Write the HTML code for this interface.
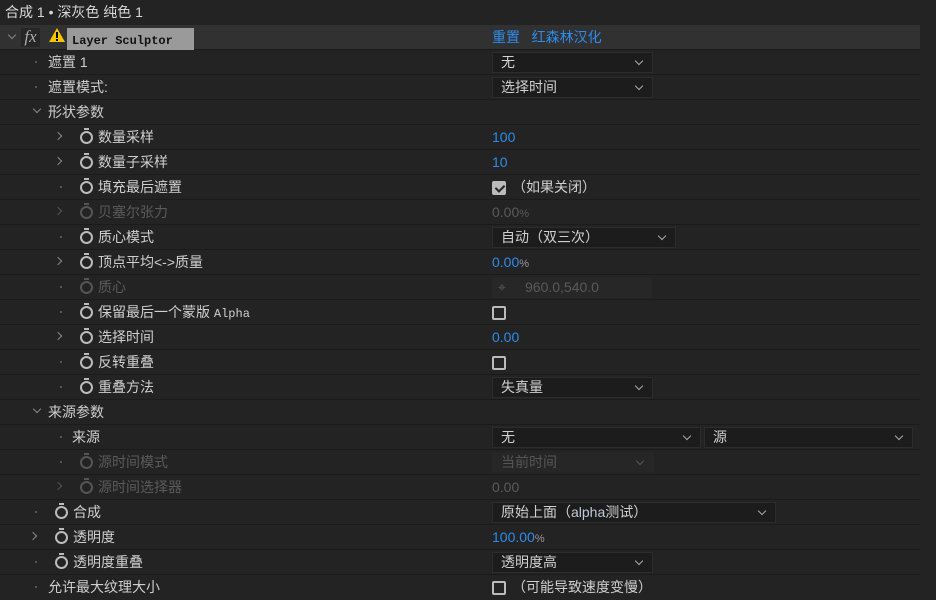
<!DOCTYPE html><html><head><meta charset="utf-8"><style>
*{margin:0;padding:0;box-sizing:border-box}
body{width:936px;height:600px;background:#232323;overflow:hidden;position:relative;font-family:"Liberation Sans","Noto Sans CJK SC",sans-serif;font-size:14px;color:#cfcfcf}
.r{position:absolute;left:0;width:920px;height:25px;border-bottom:1px solid #1b1b1b}
.t{position:absolute;top:3px;white-space:nowrap;line-height:18px}
.dis{color:#5a5a5a}
.blue{color:#2d8ceb}
.dot{position:absolute;top:11px;width:2px;height:2px;background:#555}
.chr{position:absolute;top:8px;width:6px;height:6px;border-right:1px solid #888;border-bottom:1px solid #888;transform:rotate(-45deg)}
.chd{position:absolute;top:6px;width:6px;height:6px;border-right:1px solid #888;border-bottom:1px solid #888;transform:rotate(45deg)}
.sw{position:absolute;top:6px;width:13px;height:13px;border:2px solid #bbb;border-radius:50%}
.sw:before{content:"";position:absolute;left:2px;top:-5px;width:5px;height:2px;background:#bbb}
.sw.d{border-color:#555}.sw.d:before{background:#555}
.dd{position:absolute;top:2px;height:21px;background:#1c1c1c;border:1px solid #2c2c2c;padding-left:8px;line-height:19px;color:#d0d0d0}
.dd:after{content:"";position:absolute;right:10px;top:5px;width:5px;height:5px;border-right:1px solid #aaa;border-bottom:1px solid #aaa;transform:rotate(45deg)}
.dd.d{background:#262626;border-color:#262626;color:#555}.dd.d:after{border-color:#555}
.cb{position:absolute;top:6px;left:492px;width:14px;height:14px;border:2px solid #bbb;border-radius:2px}
.cb.on{background:#bbb}
.cb.on:after{content:"";position:absolute;left:3px;top:0px;width:4px;height:7px;border-right:2px solid #222;border-bottom:2px solid #222;transform:rotate(45deg)}
.pct{font-size:11px;color:#999}
</style></head><body>
<div class="t" style="left:5px;top:3px;color:#d8d8d8">合成 1 • 深灰色 纯色 1</div>
<div style="position:absolute;left:0;top:25px;width:920px;height:25px;background:#313131;border-bottom:1px solid #1b1b1b">
 <div class="chd" style="left:9px;top:7px"></div>
 <div style="position:absolute;left:21px;top:3px;width:19px;height:19px;background:#262626;color:#aaa;font-style:italic;font-family:'Liberation Serif',serif;font-size:17px;line-height:17px;text-align:center">fx</div>
 <svg style="position:absolute;left:49px;top:3px" width="16" height="14"><polygon points="8,0 16,14 0,14" fill="#f5c400"/><rect x="7" y="4" width="2" height="6" fill="#000"/><rect x="7" y="11" width="2" height="2" fill="#000"/></svg>
 <div style="position:absolute;left:67px;top:3px;width:127px;height:22px;background:#9a9a9a;color:#111;font-family:'Liberation Mono',monospace;font-weight:bold;font-size:12px;line-height:26px;padding-left:5px">Layer Sculptor</div>
 <div class="t blue" style="left:492px">重置 &nbsp;&nbsp;红森林汉化</div>
</div>
<div class="r" style="top:50px"><div class="dot" style="left:35px"></div><div class="t" style="left:48px">遮置 1</div><div class="dd" style="left:492px;width:161px">无</div></div>
<div class="r" style="top:75px"><div class="dot" style="left:35px"></div><div class="t" style="left:48px">遮置模式:</div><div class="dd" style="left:492px;width:161px">选择时间</div></div>
<div class="r" style="top:100px"><div class="chd" style="left:34px"></div><div class="t" style="left:48px">形状参数</div></div>
<div class="r" style="top:125px"><div class="chr" style="left:55px"></div><div class="sw" style="left:80px"></div><div class="t" style="left:98px">数量采样</div><div class="t blue" style="left:492px">100</div></div>
<div class="r" style="top:150px"><div class="chr" style="left:55px"></div><div class="sw" style="left:80px"></div><div class="t" style="left:98px">数量子采样</div><div class="t blue" style="left:492px">10</div></div>
<div class="r" style="top:175px"><div class="dot" style="left:60px"></div><div class="sw" style="left:80px"></div><div class="t" style="left:98px">填充最后遮置</div><div class="cb on"></div><div class="t" style="left:512px">（如果关闭）</div></div>
<div class="r" style="top:200px"><div class="chr" style="left:55px;border-color:#555"></div><div class="sw d" style="left:80px"></div><div class="t dis" style="left:98px">贝塞尔张力</div><div class="t dis" style="left:492px">0.00<span style="font-size:11px">%</span></div></div>
<div class="r" style="top:225px"><div class="dot" style="left:60px"></div><div class="sw" style="left:80px"></div><div class="t" style="left:98px">质心模式</div><div class="dd" style="left:492px;width:184px">自动（双三次）</div></div>
<div class="r" style="top:250px"><div class="chr" style="left:55px"></div><div class="sw" style="left:80px"></div><div class="t" style="left:98px">顶点平均&lt;-&gt;质量</div><div class="t blue" style="left:492px">0.00<span class="pct">%</span></div></div>
<div class="r" style="top:275px"><div class="dot" style="left:60px"></div><div class="sw d" style="left:80px"></div><div class="t dis" style="left:98px">质心</div><div style="position:absolute;left:492px;top:2px;width:160px;height:21px;background:#272727"></div><div class="t dis" style="left:498px">⌖</div><div class="t dis" style="left:525px">960.0,540.0</div></div>
<div class="r" style="top:300px"><div class="dot" style="left:60px"></div><div class="sw" style="left:80px"></div><div class="t" style="left:98px">保留最后一个蒙版 <span style="font-family:'Liberation Mono',monospace;font-size:12px">Alpha</span></div><div class="cb"></div></div>
<div class="r" style="top:325px"><div class="chr" style="left:55px"></div><div class="sw" style="left:80px"></div><div class="t" style="left:98px">选择时间</div><div class="t blue" style="left:492px">0.00</div></div>
<div class="r" style="top:350px"><div class="dot" style="left:60px"></div><div class="sw" style="left:80px"></div><div class="t" style="left:98px">反转重叠</div><div class="cb"></div></div>
<div class="r" style="top:375px"><div class="dot" style="left:60px"></div><div class="sw" style="left:80px"></div><div class="t" style="left:98px">重叠方法</div><div class="dd" style="left:492px;width:161px">失真量</div></div>
<div class="r" style="top:400px"><div class="chd" style="left:34px"></div><div class="t" style="left:48px">来源参数</div></div>
<div class="r" style="top:425px"><div class="dot" style="left:60px"></div><div class="t" style="left:72px">来源</div><div class="dd" style="left:492px;width:209px">无</div><div class="dd" style="left:704px;width:209px">源</div></div>
<div class="r" style="top:450px"><div class="dot" style="left:60px"></div><div class="sw d" style="left:80px"></div><div class="t dis" style="left:98px">源时间模式</div><div class="dd d" style="left:492px;width:162px">当前时间</div></div>
<div class="r" style="top:475px"><div class="chr" style="left:55px;border-color:#555"></div><div class="sw d" style="left:80px"></div><div class="t dis" style="left:98px">源时间选择器</div><div class="t dis" style="left:492px">0.00</div></div>
<div class="r" style="top:500px"><div class="dot" style="left:35px"></div><div class="sw" style="left:55px"></div><div class="t" style="left:73px">合成</div><div class="dd" style="left:492px;width:284px">原始上面（<span style="color:#c0c8d8">alpha</span>测试）</div></div>
<div class="r" style="top:525px"><div class="chr" style="left:30px"></div><div class="sw" style="left:55px"></div><div class="t" style="left:73px">透明度</div><div class="t blue" style="left:492px">100.00<span class="pct">%</span></div></div>
<div class="r" style="top:550px"><div class="dot" style="left:35px"></div><div class="sw" style="left:55px"></div><div class="t" style="left:73px">透明度重叠</div><div class="dd" style="left:492px;width:161px">透明度高</div></div>
<div class="r" style="top:575px;border-bottom:none"><div class="dot" style="left:35px"></div><div class="t" style="left:48px">允许最大纹理大小</div><div class="cb"></div><div class="t" style="left:512px">（可能导致速度变慢）</div></div>
</body></html>
